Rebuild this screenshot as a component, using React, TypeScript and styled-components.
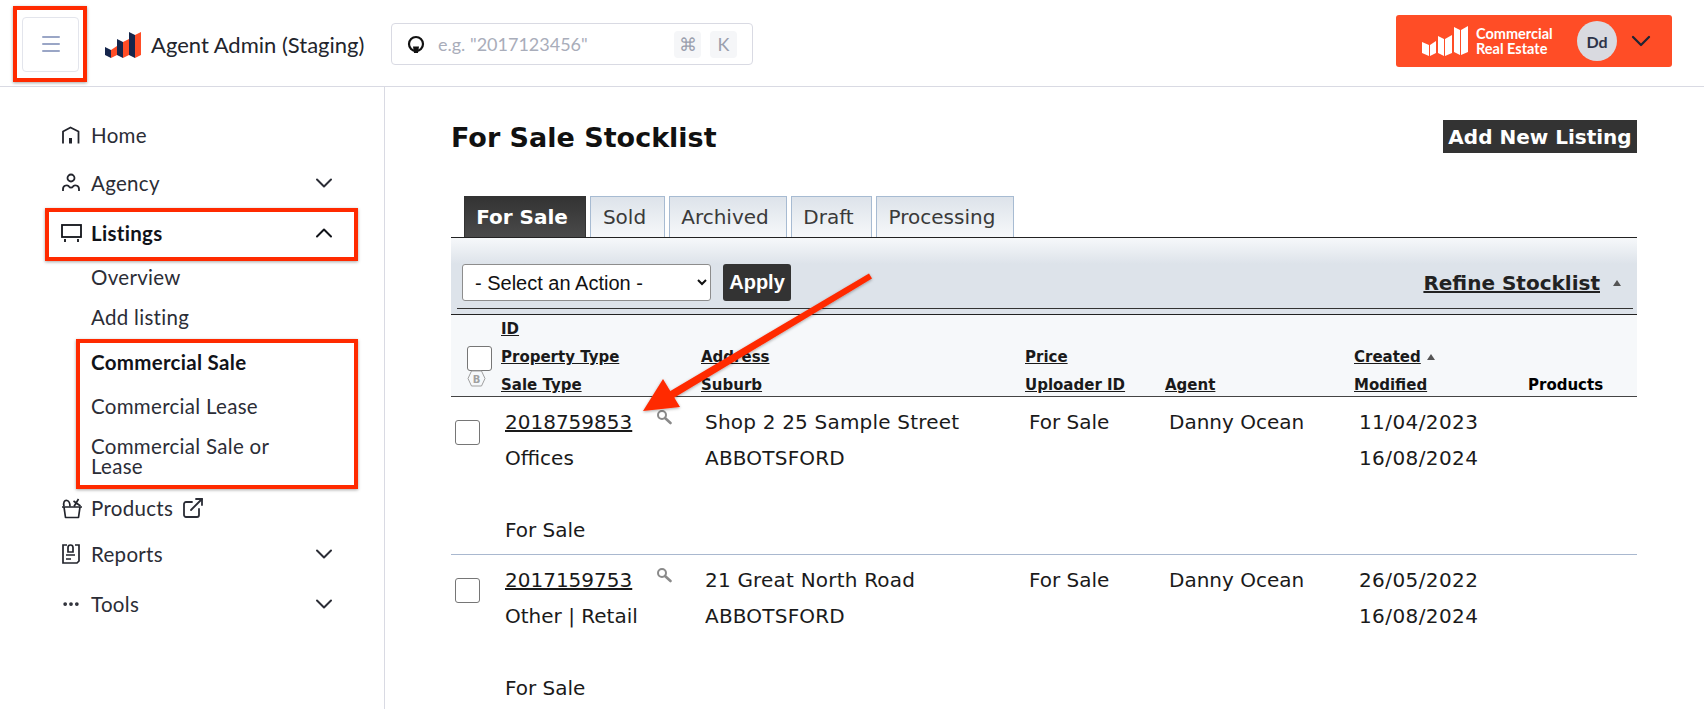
import React from 'react';
import styled, { createGlobalStyle } from 'styled-components';
import { ChevronDown, ChevronUp, Menu, ExternalLink, Ellipsis } from 'lucide-react';

const GlobalStyle = createGlobalStyle`
    html, body {
        margin: 0;
        padding: 0;
        background: #fff;
    }
    body {
        width: 1704px;
        height: 709px;
        overflow: hidden;
        font-family: 'DejaVu Sans', sans-serif;
    }
    * {
        box-sizing: border-box;
    }
`;

const NAV_FONT = `'Lato', 'Noto Sans', sans-serif`;
const TABLE_FONT = `'DejaVu Sans', Verdana, sans-serif`;

const Page = styled.div`
    position: relative;
    width: 1704px;
    height: 709px;
    overflow: hidden;
    display: flex;
    flex-direction: column;
`;

// ---------------------------------------------------
// top bar
const TopBar = styled.header`
    flex: none;
    height: 87px;
    border-bottom: 1px solid #d9dae3;
    display: flex;
    align-items: center;
    padding: 2px 32px 0 22px;
`;

const MenuButton = styled.button`
    width: 57px;
    height: 55px;
    background: #fff;
    border: 1px solid #e3e5ec;
    border-radius: 4px;
    display: flex;
    align-items: center;
    justify-content: center;
    color: #9aa6c6;
    padding: 0;
`;

const Brand = styled.div`
    display: flex;
    align-items: center;
    margin-left: 26px;
    gap: 9px;
    width: 286px;
    font-family: ${NAV_FONT};
    font-size: 22px;
    color: #22242c;
    white-space: nowrap;
`;

const SearchBox = styled.div`
    width: 362px;
    height: 42px;
    border: 1px solid #d9dae3;
    border-radius: 4px;
    display: flex;
    align-items: center;
    padding: 0 15px 0 15px;
    font-family: ${NAV_FONT};
`;

const SearchHint = styled.span`
    flex: 1;
    margin-left: 13px;
    font-size: 18px;
    color: #a9adba;
`;

const KeyCap = styled.span`
    width: 27px;
    height: 27px;
    margin-left: 9px;
    background: #f5f6f8;
    border-radius: 4px;
    color: #9a9fad;
    font-size: 18px;
    display: flex;
    align-items: center;
    justify-content: center;
`;

const AccountButton = styled.div`
    margin-left: auto;
    margin-bottom: 6px;
    width: 276px;
    height: 52px;
    background: #ff4d26;
    border-radius: 3px;
    display: flex;
    align-items: center;
    padding-left: 26px;
`;

const AccountLogoText = styled.div`
    margin-left: 7px;
    width: 100px;
    font-family: ${NAV_FONT};
    font-size: 14.5px;
    font-weight: 700;
    line-height: 15px;
    color: #fff;
`;

const Avatar = styled.div`
    margin-left: 1px;
    width: 40px;
    height: 40px;
    border-radius: 50%;
    background: #d9dae0;
    color: #2d3348;
    font-family: ${NAV_FONT};
    font-size: 16px;
    font-weight: 700;
    display: flex;
    align-items: center;
    justify-content: center;
`;

const AccountChevron = styled.div`
    margin-left: 8px;
    display: flex;
    color: #1f2433;
`;

// ---------------------------------------------------
// sidebar
const Body = styled.div`
    flex: 1;
    display: flex;
    min-height: 0;
`;

const Sidebar = styled.nav`
    flex: none;
    width: 385px;
    border-right: 1px solid #d9dae3;
    padding: 26px 46px 0 61px;
    font-family: ${NAV_FONT};
    color: #2b2d36;
`;

const NavRow = styled.div<{ $height: number; $bold?: boolean }>`
    height: ${props => props.$height}px;
    display: flex;
    align-items: center;
    font-size: 20.5px;
    letter-spacing: 0.3px;
    font-weight: ${props => props.$bold ? 700 : 400};
    color: ${props => props.$bold ? '#111319' : '#2b2d36'};
`;

const NavIcon = styled.span`
    width: 30px;
    flex: none;
    display: flex;
`;

const NavChevron = styled.span`
    margin-left: auto;
    display: flex;
`;

const NavLinkIcon = styled.span`
    margin-left: 8px;
    display: flex;
`;

const SubItem = styled.div<{ $height: number; $bold?: boolean }>`
    height: ${props => props.$height}px;
    display: flex;
    align-items: center;
    padding-left: 30px;
    padding-right: 50px;
    font-size: 20.5px;
    letter-spacing: 0.3px;
    line-height: 20px;
    font-weight: ${props => props.$bold ? 700 : 400};
    color: ${props => props.$bold ? '#111319' : '#2b2d36'};
`;

// ---------------------------------------------------
// main content
const Main = styled.main`
    flex: 1;
    padding: 33px 67px 0 66px;
    font-family: ${TABLE_FONT};
    color: #1a1a1a;
`;

const TitleRow = styled.div`
    display: flex;
    align-items: flex-start;
    justify-content: space-between;
    height: 76px;
`;

const Title = styled.h1`
    margin: 0;
    font-size: 27px;
    line-height: 36px;
    font-weight: 700;
    color: #111;
`;

const AddButton = styled.div`
    width: 194px;
    height: 33px;
    background: #333;
    color: #fff;
    font-size: 20px;
    font-weight: 700;
    display: flex;
    align-items: center;
    justify-content: center;
    white-space: nowrap;
`;

const Tabs = styled.div`
    display: flex;
    gap: 4px;
    padding-left: 13px;
    height: 42px;
    border-bottom: 1px solid #222;
`;

const Tab = styled.div<{ $active?: boolean; $width: number }>`
    width: ${props => props.$width}px;
    display: flex;
    align-items: center;
    justify-content: center;
    padding-right: 6px;
    font-size: 20px;
    font-weight: ${props => props.$active ? 700 : 400};
    color: ${props => props.$active ? '#fff' : '#3a3a3a'};
    background: ${props => props.$active
        ? 'linear-gradient(#333, #4a4a4a)'
        : 'linear-gradient(#dde3ea, #f6f8fa)'};
    border: 1px solid ${props => props.$active ? '#333' : '#a7bbd2'};
    border-bottom: none;
`;

const ToolBar = styled.div`
    height: 77px;
    background: linear-gradient(#f6f8fa 0, #dde3ea 26px, #dde3ea 100%);
    border-bottom: 1px solid #222;
    padding: 0 4px 0 6px;
`;

const ToolBarInner = styled.div`
    height: 71px;
    border-bottom: 1px solid #333;
    display: flex;
    align-items: center;
    padding: 19px 0 0 5px;
`;

const ActionSelect = styled.select`
    width: 249px;
    height: 37px;
    background: #fff;
    border: 1px solid #8d8d8d;
    border-radius: 3px;
    font-family: 'Liberation Sans', Arial, sans-serif;
    font-size: 20px;
    color: #111;
    padding-left: 8px;
`;

const ApplyButton = styled.div`
    margin-left: 12px;
    width: 68px;
    height: 37px;
    background: #333;
    border-radius: 3px;
    color: #fff;
    font-family: 'Liberation Sans', Arial, sans-serif;
    font-size: 20px;
    font-weight: 700;
    display: flex;
    align-items: center;
    justify-content: center;
`;

const Refine = styled.div`
    margin-left: auto;
    margin-right: 12px;
    display: flex;
    align-items: center;
    gap: 13px;
    font-size: 20px;
    font-weight: 700;
    color: #222;
    text-decoration: underline;
`;

const SortMark = styled.span<{ $size: number }>`
    display: inline-block;
    width: 0;
    height: 0;
    border-left: ${props => props.$size}px solid transparent;
    border-right: ${props => props.$size}px solid transparent;
    border-bottom: ${props => props.$size * 1.6}px solid #555;
`;

const GRID = '50px 200px 324px 140px 189px 174px 1fr';

const HeadGrid = styled.div`
    display: grid;
    grid-template-columns: ${GRID};
    height: 82px;
    background: #f6f8fa;
    border-bottom: 1px solid #444;
    font-size: 15px;
    font-weight: 700;
`;

const HeadCell = styled.div`
    display: flex;
    flex-direction: column;
    justify-content: flex-end;
    padding-bottom: 5px;
`;

const HeadLine = styled.div<{ $plain?: boolean }>`
    height: 28px;
    display: flex;
    align-items: center;
    gap: 6px;
    white-space: nowrap;
    color: ${props => props.$plain ? '#000' : '#1a1a1a'};
    text-decoration: ${props => props.$plain ? 'none' : 'underline'};
`;

const HeadCheckCell = styled.div`
    position: relative;
    padding: 31px 0 0 16px;
`;

const CheckBox = styled.span<{ $size: number }>`
    display: block;
    width: ${props => props.$size}px;
    height: ${props => props.$size}px;
    background: #fff;
    border: 1px solid #767676;
    border-radius: 3px;
`;

const BulkIcon = styled.span`
    display: flex;
    margin: -1px 0 0 0;
`;

const Row = styled.div<{ $last?: boolean }>`
    display: grid;
    grid-template-columns: ${GRID};
    height: 158px;
    font-size: 20px;
    color: #1a1a1a;
    border-bottom: ${props => props.$last ? 'none' : '1px solid #a9b8cf'};
`;

const RowCheckCell = styled.div`
    padding: 23px 0 0 4px;
`;

const RowCell = styled.div<{ $inset?: number; $spacing?: number }>`
    padding: 7px 0 0 ${props => props.$inset ?? 4}px;
    line-height: 36px;
    white-space: nowrap;
    letter-spacing: ${props => props.$spacing ?? 0}px;
`;

const IdLine = styled.div`
    display: flex;
    align-items: flex-start;
`;

const IdLink = styled.span`
    text-decoration: underline;
    width: 151px;
`;

const SearchGlyph = styled.span`
    display: flex;
    margin-top: 5px;
`;

const GapLine = styled.div`
    height: 36px;
`;

// ---------------------------------------------------
// annotations drawn over the screenshot
const Highlight = styled.div<{ $x: number; $y: number; $w: number; $h: number }>`
    position: absolute;
    left: ${props => props.$x}px;
    top: ${props => props.$y}px;
    width: ${props => props.$w}px;
    height: ${props => props.$h}px;
    border: 4px solid #ff2a00;
    box-shadow: 0 1px 3px rgba(0, 0, 0, 0.35);
    pointer-events: none;
`;

const ArrowLayer = styled.svg`
    position: absolute;
    left: 0;
    top: 0;
    pointer-events: none;
`;

const BrandLogo = () => (
    <svg width="37" height="27" viewBox="0 0 37 27">
        <path d="M0 16l6 3v8l-6-3z" fill="#16264c" />
        <path d="M6 19l6-4v9l-6 3z" fill="#ff4d26" />
        <path d="M12 8l6 3v16l-6-3z" fill="#16264c" />
        <path d="M18 11l6-3v16l-6 3z" fill="#ff4d26" />
        <path d="M24 1l6 3v23l-6-3z" fill="#16264c" />
        <path d="M30 4l6-3v23l-6 3z" fill="#ff4d26" />
    </svg>
);

const CreaLogo = () => (
    <svg width="47" height="32" viewBox="0 0 47 32" fill="#fff">
        <path d="M0 17l7 3v11l-7-3z" />
        <path d="M8 20l6-4v12l-6 3z" />
        <path d="M16 11l6 3v17l-6-3z" />
        <path d="M23 14l7-4v18l-7 3z" />
        <path d="M32 2l6 3v25l-6-3z" />
        <path d="M39 5l7-4v26l-7 3z" />
    </svg>
);

const SearchIcon = () => (
    <svg width="18" height="19" viewBox="0 0 18 19" fill="none" stroke="#111" strokeWidth="2.200">
        <circle cx="9" cy="9" r="7" />
        <path d="M6 11.500h6L11 18H7z" fill="#111" stroke="none" />
    </svg>
);

const HomeIcon = () => (
    <svg width="20" height="20" viewBox="0 0 20 20" fill="none" stroke="#22242c" strokeWidth="1.800">
        <path d="M2 18.500V6.500l7.500-4 8 4v12" strokeLinejoin="round" />
        <rect x="8" y="13" width="3" height="5.500" fill="#22242c" stroke="none" />
    </svg>
);

const PersonIcon = () => (
    <svg width="20" height="20" viewBox="0 0 20 20" fill="none" stroke="#22242c" strokeWidth="1.800">
        <circle cx="10" cy="5" r="3.500" />
        <path d="M2 18v-2c0-4 5-4.500 6-2.500 1 1.500 3 1.500 4 0 1-2 6-1.500 6 2.500v2" />
    </svg>
);

const BoardIcon = () => (
    <svg width="22" height="20" viewBox="0 0 22 20" fill="none" stroke="#111319" strokeWidth="1.800">
        <rect x="1" y="2" width="19" height="12" />
        <path d="M4 16v3M17 16v3" />
    </svg>
);

const BasketIcon = () => (
    <svg width="22" height="22" viewBox="0 0 22 22" fill="none" stroke="#22242c" strokeWidth="1.700">
        <path d="M1 10h20M3 10l1.500 10.500h13L19 10" strokeLinejoin="round" />
        <path d="M3 9.500C2 5 3.500 3 6 3.500c2 .5 3 3 3 6M13 9.500l4.500-7.500M12.500 4l7 5" />
    </svg>
);

const ReportIcon = () => (
    <svg width="20" height="22" viewBox="0 0 20 22" fill="none" stroke="#22242c" strokeWidth="1.700">
        <path d="M6 2H2v18h14l2-2V2h-4" />
        <path d="M7 9V4.500a2.500 2.500 0 0 1 5 0V9z" />
        <path d="M5 12h9M5 16h5" />
    </svg>
);

const LoupeIcon = () => (
    <svg width="16" height="16" viewBox="0 0 16 16" fill="none" stroke="#8a8a8a">
        <circle cx="6" cy="6" r="4" strokeWidth="2" />
        <path d="M9 9l5.500 5" strokeWidth="2.600" strokeLinecap="round" />
    </svg>
);

const BulkBadge = () => (
    <svg width="19" height="17" viewBox="0 0 19 17" fill="none" stroke="#a0a0a0">
        <path d="M1 8.500L4.500 1h10l3.500 7.500L14.500 16h-10z" />
        <text x="9.500" y="12.500" fontSize="10" fontWeight="700" textAnchor="middle" fill="#a0a0a0" stroke="none" fontFamily="'DejaVu Sans', sans-serif">B</text>
    </svg>
);

const rows = [
    { id: '2018759853', type: 'Offices', address: 'Shop 2 25 Sample Street', created: '11/04/2023' },
    { id: '2017159753', type: 'Other | Retail', address: '21 Great North Road', created: '26/05/2022' },
];

const tabs = [
    { label: 'For Sale', width: 122, active: true },
    { label: 'Sold', width: 75 },
    { label: 'Archived', width: 118 },
    { label: 'Draft', width: 81 },
    { label: 'Processing', width: 138 },
];

const App: React.FC = () => {
    return (
        <Page>
            <GlobalStyle />
            <TopBar>
                <MenuButton><Menu size={24} strokeWidth={2} /></MenuButton>
                <Brand><BrandLogo />Agent Admin (Staging)</Brand>
                <SearchBox>
                    <SearchIcon />
                    <SearchHint>e.g. "2017123456"</SearchHint>
                    <KeyCap>⌘</KeyCap>
                    <KeyCap>K</KeyCap>
                </SearchBox>
                <AccountButton>
                    <CreaLogo />
                    <AccountLogoText>Commercial<br />Real Estate</AccountLogoText>
                    <Avatar>Dd</Avatar>
                    <AccountChevron><ChevronDown size={32} strokeWidth={1.700} /></AccountChevron>
                </AccountButton>
            </TopBar>
            <Body>
                <Sidebar>
                    <NavRow $height={44}><NavIcon><HomeIcon /></NavIcon>Home</NavRow>
                    <NavRow $height={52}><NavIcon><PersonIcon /></NavIcon>Agency<NavChevron><ChevronDown size={28} strokeWidth={1.700} /></NavChevron></NavRow>
                    <NavRow $height={48} $bold><NavIcon><BoardIcon /></NavIcon>Listings<NavChevron><ChevronUp size={28} strokeWidth={1.700} /></NavChevron></NavRow>
                    <SubItem $height={40}>Overview</SubItem>
                    <SubItem $height={40}>Add listing</SubItem>
                    <SubItem $height={50} $bold>Commercial Sale</SubItem>
                    <SubItem $height={38}>Commercial Lease</SubItem>
                    <SubItem $height={62}>Commercial Sale or Lease</SubItem>
                    <NavRow $height={42}><NavIcon><BasketIcon /></NavIcon>Products<NavLinkIcon><ExternalLink size={24} strokeWidth={1.800} /></NavLinkIcon></NavRow>
                    <NavRow $height={50}><NavIcon><ReportIcon /></NavIcon>Reports<NavChevron><ChevronDown size={28} strokeWidth={1.700} /></NavChevron></NavRow>
                    <NavRow $height={50}><NavIcon><Ellipsis size={20} strokeWidth={2.500} /></NavIcon>Tools<NavChevron><ChevronDown size={28} strokeWidth={1.700} /></NavChevron></NavRow>
                </Sidebar>
                <Main>
                    <TitleRow>
                        <Title>For Sale Stocklist</Title>
                        <AddButton>Add New Listing</AddButton>
                    </TitleRow>
                    <Tabs>
                        {tabs.map((tab) => (
                            <Tab key={tab.label} $active={tab.active} $width={tab.width}>{tab.label}</Tab>
                        ))}
                    </Tabs>
                    <ToolBar>
                        <ToolBarInner>
                            <ActionSelect defaultValue="">
                                <option value="">- Select an Action -</option>
                            </ActionSelect>
                            <ApplyButton>Apply</ApplyButton>
                            <Refine>Refine Stocklist<SortMark $size={4} /></Refine>
                        </ToolBarInner>
                    </ToolBar>
                    <HeadGrid>
                        <HeadCheckCell>
                            <CheckBox $size={25} />
                            <BulkIcon><BulkBadge /></BulkIcon>
                        </HeadCheckCell>
                        <HeadCell>
                            <HeadLine>ID</HeadLine>
                            <HeadLine>Property Type</HeadLine>
                            <HeadLine>Sale Type</HeadLine>
                        </HeadCell>
                        <HeadCell>
                            <HeadLine>Address</HeadLine>
                            <HeadLine>Suburb</HeadLine>
                        </HeadCell>
                        <HeadCell>
                            <HeadLine>Price</HeadLine>
                            <HeadLine>Uploader ID</HeadLine>
                        </HeadCell>
                        <HeadCell>
                            <HeadLine>Agent</HeadLine>
                        </HeadCell>
                        <HeadCell>
                            <HeadLine><span>Created</span><SortMark $size={4} /></HeadLine>
                            <HeadLine>Modified</HeadLine>
                        </HeadCell>
                        <HeadCell>
                            <HeadLine $plain>Products</HeadLine>
                        </HeadCell>
                    </HeadGrid>
                    {rows.map((row, index) => (
                        <Row key={row.id} $last={index === rows.length - 1}>
                            <RowCheckCell><CheckBox $size={25} /></RowCheckCell>
                            <RowCell>
                                <IdLine>
                                    <IdLink>{row.id}</IdLink>
                                    <SearchGlyph><LoupeIcon /></SearchGlyph>
                                </IdLine>
                                <div>{row.type}</div>
                                <GapLine />
                                <div>For Sale</div>
                            </RowCell>
                            <RowCell $spacing={0.2}>
                                <div>{row.address}</div>
                                <div>ABBOTSFORD</div>
                            </RowCell>
                            <RowCell>For Sale</RowCell>
                            <RowCell>Danny Ocean</RowCell>
                            <RowCell $inset={5} $spacing={0.4}>
                                <div>{row.created}</div>
                                <div>16/08/2024</div>
                            </RowCell>
                            <RowCell />
                        </Row>
                    ))}
                </Main>
            </Body>
            <Highlight $x={13} $y={6} $w={74} $h={76} />
            <Highlight $x={45} $y={208} $w={313} $h={53} />
            <Highlight $x={76} $y={339} $w={282} $h={150} />
            <ArrowLayer width="1704" height="709" viewBox="0 0 1704 709">
                <defs>
                    <filter id="arrowShadow" x="-10%" y="-10%" width="120%" height="130%">
                        <feDropShadow dx="0" dy="1" stdDeviation="1.500" floodColor="#000" floodOpacity="0.35" />
                    </filter>
                </defs>
                <g filter="url(#arrowShadow)" fill="#ff2a00">
                    <path d="M869 273.500L872 278.500L672 399L667 393z" />
                    <path d="M643 411L663 379L680 407z" />
                </g>
            </ArrowLayer>
        </Page>
    );
};

export default App;
